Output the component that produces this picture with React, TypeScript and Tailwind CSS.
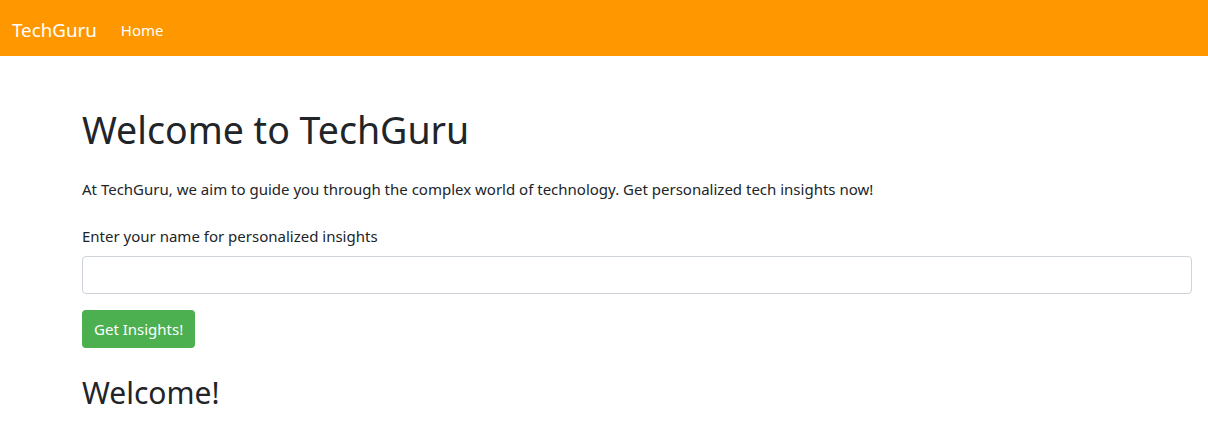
import { useState } from "react";

export default function App() {
  const [name, setName] = useState("");

  return (
    <div className="min-h-screen bg-white font-['Noto_Sans',sans-serif] text-[#212529]">
      <nav className="flex h-14 items-center bg-[#ff9800] px-3 pt-1">
        <a className="mr-6 text-[18.75px] text-white">TechGuru</a>
        <a className="text-[15px] text-white">Home</a>
      </nav>

      <div className="pl-[82px] pr-4 pt-[50px]">
        <h1 className="text-[37.5px] leading-[48px]">Welcome to TechGuru</h1>
        <p className="mt-[23px] text-[15px] leading-6">
          At TechGuru, we aim to guide you through the complex world of technology. Get personalized tech insights now!
        </p>

        <label className="mt-[23px] block text-[15px] leading-6">Enter your name for personalized insights</label>
        <input
          type="text"
          value={name}
          onChange={(e) => setName(e.target.value)}
          className="mt-2 block h-[38px] w-full rounded border border-[#ced4da] px-3 outline-none"
        />

        <button className="mt-4 h-[38px] rounded bg-[#4caf50] px-3 text-[15px] text-white">Get Insights!</button>

        <h2 className="mt-[26px] text-[30px] leading-[38px]">Welcome!</h2>
      </div>
    </div>
  );
}
